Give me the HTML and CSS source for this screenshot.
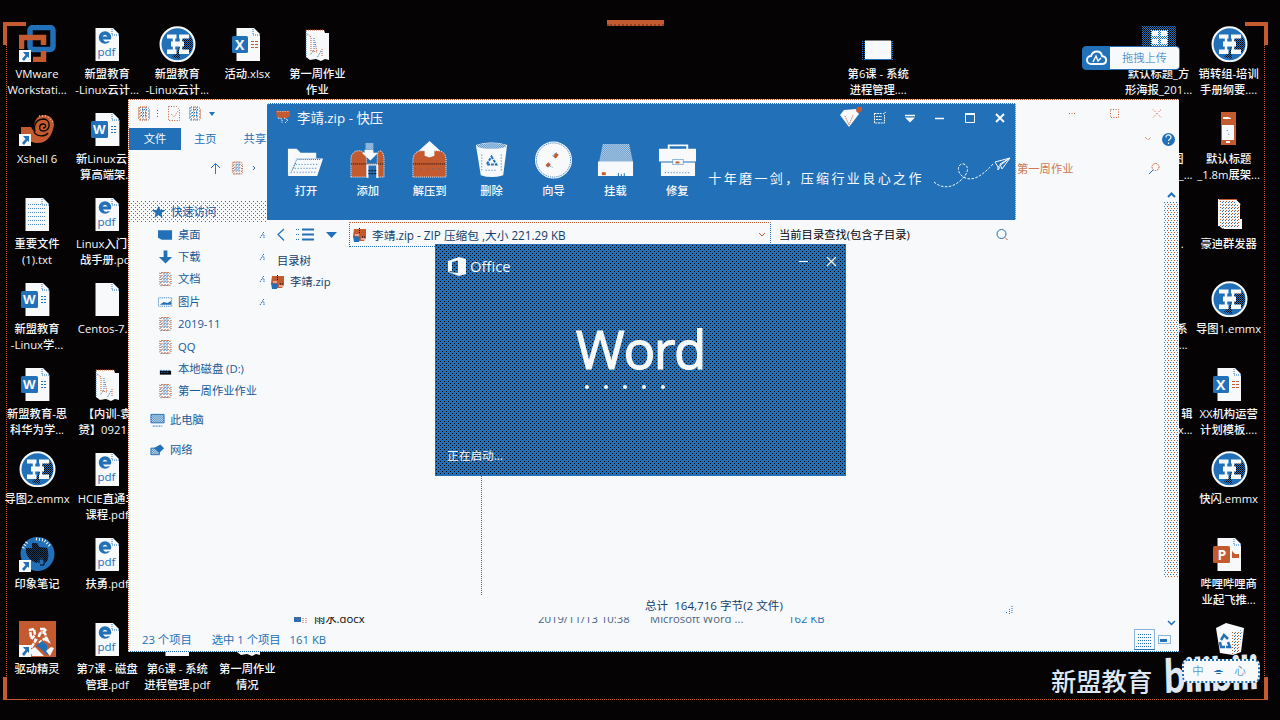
FILE: index.html
```html
<!DOCTYPE html>
<html lang="zh-CN">
<head>
<meta charset="utf-8">
<title>桌面</title>
<link rel="stylesheet" href="styles.css">
</head>
<body>
<svg class="defs" width="0" height="0">
  <defs>
    <pattern id="dith" width="2" height="2" patternUnits="userSpaceOnUse"><rect width="1" height="1" fill="#2270b8"/></pattern>
    <pattern id="dithw" width="2" height="2" patternUnits="userSpaceOnUse"><rect width="2" height="2" fill="#2270b8"/><rect width="1" height="1" fill="#f7f9fb"/><rect x="1" y="1" width="1" height="1" fill="#f7f9fb"/></pattern>
    <pattern id="dithk" width="2" height="2" patternUnits="userSpaceOnUse"><rect width="2" height="2" fill="#2270b8"/><rect width="1" height="1" fill="#050304"/><rect x="1" y="1" width="1" height="1" fill="#050304"/></pattern>
    <pattern id="ditho" width="3" height="3" patternUnits="userSpaceOnUse"><rect width="3" height="3" fill="#f7f9fb"/><rect width="1" height="1" fill="#c45a30"/><rect x="2" y="1" width="1" height="1" fill="#2270b8"/></pattern>
  </defs>
  <symbol id="page" viewBox="0 0 37 37"><path d="M6.500 3H24l6 6v27H6.500z" fill="#f7f9fb"/><path d="M23 4v6h7" fill="none" stroke="#2270b8" stroke-dasharray="1 1"/></symbol>
  <symbol id="pdf" viewBox="0 0 37 37"><use href="#page"/><circle cx="16" cy="12.500" r="6.200" fill="#2270b8"/><path d="M13.500 11.500q2.500-3.500 5 0zM14 14.500h9v2l-4.500-.3q-2.500 1.800-4.500-1.700z" fill="#f7f9fb"/><text x="8.500" y="31" font-family="Open Sans" font-size="11.500" fill="#2270b8">pdf</text></symbol>
  <symbol id="txt" viewBox="0 0 37 37"><use href="#page"/><path d="M9 9.500h13M9 13.500h17M9 17.500h17M9 21.500h17M9 25.500h17M9 29.500h17" stroke="#2270b8" stroke-dasharray="1 1" opacity=".8"/></symbol>
  <symbol id="doc" viewBox="0 0 37 37"><use href="#page"/><path d="M22 16.500h6M22 19.500h6M22 22.500h6" stroke="#2270b8" stroke-dasharray="2 1"/><path d="M30.500 10v26" stroke="#2270b8"/><rect x="2" y="11" width="17" height="17" rx="1.500" fill="#2270b8"/><text x="4" y="24" font-family="Open Sans" font-weight="700" font-size="13" fill="#f7f9fb">W</text></symbol>
  <symbol id="xls" viewBox="0 0 37 37"><use href="#page"/><path d="M21 16.500h8M21 19.500h8M21 22.500h8" stroke="#c45a30" stroke-dasharray="3 1"/><rect x="2" y="11" width="16" height="17" rx="1.500" fill="#2270b8"/><text x="5" y="24.500" font-family="Open Sans" font-weight="700" font-size="14" fill="#f7f9fb">X</text></symbol>
  <symbol id="ppt" viewBox="0 0 37 37"><use href="#page"/><path d="M21 16v7h7v-4h-4z" fill="#c45a30"/><rect x="2" y="11" width="17" height="17" rx="1.500" fill="#c45a30"/><text x="6.500" y="24.500" font-family="Open Sans" font-weight="700" font-size="14" fill="#f7f9fb">P</text></symbol>
  <symbol id="folder" viewBox="0 0 37 37"><path d="M7 5h18l1 3h4v27l-4-1-4 2-5-2-6 1-4-3z" fill="#f7f9fb"/><path d="M7 5h18M8 9l4 3v14M16 17l2 10-5-1M23 24v7" stroke="#c45a30" stroke-dasharray="1 1" fill="none"/><path d="M15 13v12l-4 5M7 6v26M22 26l-4 7" stroke="#2270b8" stroke-dasharray="1 1" fill="none"/></symbol>
  <symbol id="pack" viewBox="0 0 37 37"><path d="M8 5h17l4 4v25H12l-4-3z" fill="url(#ditho)"/><path d="M8 31V5h16l5 5M30 24v9H13" fill="none" stroke="#f7f9fb" stroke-width="2"/><path d="M8 4.500h18" stroke="#c45a30"/></symbol>
  <symbol id="emmx" viewBox="0 0 37 37"><circle cx="18.500" cy="19.200" r="17" fill="#2270b8" stroke="#f7f9fb" stroke-width="2"/><path d="M24 13h9l1 8-3 7H21v6l-8-2 5-5z" fill="url(#dithk)"/><path d="M8 9.500h9.500v4h-9.500zM20 9.500h10v4H20zM12 16.500h13v5H12zM8 24.500h9.500v4.500H8zM20 24.500h10V29H20z" fill="#f7f9fb"/><path d="M15 13v12M22 13v12" stroke="#f7f9fb" stroke-width="2.500"/></symbol>
  <symbol id="arrow" viewBox="0 0 12 12"><path d="M0 0h12v12H0z" fill="#f7f9fb"/><path d="M4 2h6v6L8.500 6.500 5 11 3 9l3.500-4z" fill="#2270b8"/></symbol>
  <symbol id="tiny" viewBox="0 0 14 14"><path d="M1 0h11v14H1z" fill="url(#ditho)"/><path d="M1.500 1v12M3 13.500h8M3 .5h8M12.500 3v10" stroke="#c45a30" stroke-dasharray="1 1"/><path d="M5 3h5M4 6h6M4 9h6" stroke="#2270b8" stroke-dasharray="1 1"/></symbol>
  <symbol id="zip" viewBox="0 0 14 14"><path d="M1 1h12v9l-2 3H2L0 8z" fill="#c45a30"/><path d="M0 8l7 1-1 5H1z" fill="#2270b8"/><path d="M6.500 0v6M9 9h4" stroke="#050304" stroke-dasharray="1 1"/><path d="M2 7h4M8 11h4" stroke="#f7f9fb"/></symbol>
  <symbol id="pin" viewBox="0 0 8 10"><path d="M5 2L3 4l2 1v3M3 5L1 8" fill="none" stroke="#2270b8" stroke-dasharray="1.500 .7"/></symbol>
</svg>

<div class="desktop">
  <div class="col c1">
    <div class="item"><svg class="ico" viewBox="0 0 37 37"><rect x="11" y="2.500" width="23" height="22" rx="3" fill="none" stroke="#2270b8" stroke-width="5.500"/><path d="M2.500 24V12.500h22V20M24.500 26v8.500H14" fill="none" stroke="#c45a30" stroke-width="5.500"/><use href="#arrow" y="25" width="12" height="12"/></svg><span>VMware<br>Workstati...</span></div>
    <div class="item"><svg class="ico" viewBox="0 0 37 37"><path d="M2 17h10l3 5c-1-9 2-17 10-17 6 0 10 4 10 10-2 12-8 18-16 18-6 0-10-2-17-8z" fill="#c45a30"/><path d="M16 22c-2-8 2-13 9-13 7 1 7 12-1 12-5 0-4-7 0-7 4 0 3 4 0 4M15 22c3 5 11 5 14 1" fill="none" stroke="#050304" stroke-width="1.300"/><path d="M20 6h8l7 7" fill="none" stroke="#f7f9fb" stroke-dasharray="1 2"/><use href="#arrow" y="24" width="12" height="12"/></svg><span>Xshell 6</span></div>
    <div class="item"><svg class="ico"><use href="#txt"/></svg><span>重要文件<br>(1).txt</span></div>
    <div class="item"><svg class="ico"><use href="#doc"/></svg><span>新盟教育<br>-Linux学...</span></div>
    <div class="item"><svg class="ico"><use href="#doc"/></svg><span>新盟教育-思<br>科华为学...</span></div>
    <div class="item"><svg class="ico"><use href="#emmx"/></svg><span>导图2.emmx</span></div>
    <div class="item"><svg class="ico" viewBox="0 0 37 37"><circle cx="18.500" cy="19" r="17" fill="#2270b8"/><path d="M7 13h6V8h5l2 4 8 1c2 6 2 12-2 15l-1-5-5 0-2 5c-5-2-12-6-11-15z" fill="#050304"/><path d="M7 13h6V8h5l2 4 8 1c2 6 2 12-2 15l-1-5-5 0-2 5c-5-2-12-6-11-15z" fill="url(#dithk)" opacity=".5"/><path d="M20 28v-4h5v6h-4" fill="none" stroke="#050304"/><path d="M17 4l8 1 7 7M4 13l4-6" stroke="#f7f9fb" stroke-dasharray="1 2" stroke-width="3" fill="none"/><use href="#arrow" y="25" width="12" height="12"/></svg><span>印象笔记</span></div>
    <div class="item"><svg class="ico" viewBox="0 0 37 37"><path d="M0 1h37v36H0z" fill="#c45a30"/><path d="M12 17l-1-7 4-1 1 6-3 3 4 2-5 8M21 9h6l-2 3h-3M20 17c0-6 7-6 7 0l2 4-4-2-5 4" fill="none" stroke="#f7f9fb" stroke-width="2.500" stroke-dasharray="5 1"/><path d="M17 26l6-5 5 4v5l4 2-4 3-6-6z" fill="#2270b8"/><path d="M11 30l5-3 9 9H13zM27 31l5-4 3 1-4 8z" fill="#f7f9fb"/><use href="#arrow" y="25" width="12" height="12"/></svg><span>驱动精灵</span></div>
  </div>
  <div class="col c2">
    <div class="item"><svg class="ico"><use href="#pdf"/></svg><span>新盟教育<br>-Linux云计...</span></div>
    <div class="item"><svg class="ico"><use href="#doc"/></svg><span>新Linux云计<br>算高端架...</span></div>
    <div class="item"><svg class="ico"><use href="#pdf"/></svg><span>Linux入门实<br>战手册.pdf</span></div>
    <div class="item"><svg class="ico"><use href="#page"/></svg><span>Centos-7....</span></div>
    <div class="item"><svg class="ico"><use href="#folder"/></svg><span>【内训-袁<br>赟】0921...</span></div>
    <div class="item"><svg class="ico"><use href="#pdf"/></svg><span>HCIE直通车<br>课程.pdf</span></div>
    <div class="item"><svg class="ico"><use href="#pdf"/></svg><span>扶勇.pdf</span></div>
    <div class="item"><svg class="ico"><use href="#pdf"/></svg><span>第7课 - 磁盘<br>管理.pdf</span></div>
  </div>
  <div class="col c3">
    <div class="item"><svg class="ico"><use href="#emmx"/></svg><span>新盟教育<br>-Linux云计...</span></div>
    <div class="item last"><svg class="ico"><use href="#page"/></svg><span>第6课 - 系统<br>进程管理.pdf</span></div>
  </div>
  <div class="col c4">
    <div class="item"><svg class="ico"><use href="#xls"/></svg><span>活动.xlsx</span></div>
    <div class="item last"><svg class="ico"><use href="#folder"/></svg><span>第一周作业<br>情况</span></div>
  </div>
  <div class="col c5">
    <div class="item"><svg class="ico"><use href="#folder"/></svg><span>第一周作业<br>作业</span></div>
  </div>
  <div class="col c13">
    <div class="item"><svg class="ico" viewBox="0 0 37 37"><path d="M1 15h33v20H1z" fill="url(#dith)"/><path d="M5 15.500h26V34H5z" fill="#f7f9fb"/><path d="M5 34.500h26.500V16" fill="none" stroke="#2270b8"/></svg><span>第6课 - 系统<br>进程管理....</span></div>
  </div>
  <div class="col c17">
    <div class="item"><svg class="ico" viewBox="0 0 37 37"><path d="M2 1h34v20H2z" fill="url(#dithk)"/><path d="M11 5h17v16H11z" fill="url(#dithw)"/><path d="M12 6h6v5h-6zM21 6h6v5h-6zM12 14h6v5h-6zM21 14h6v5h-6z" fill="#f7f9fb"/></svg><span>默认标题_方<br>形海报_201...</span></div>
    <div class="item part p1"><span><em>图</em><br>_...</span></div>
    <div class="item part p10"><span>.</span></div>
    <div class="item part p6"><span>系<br>...</span></div>
    <div class="item part p1"><span>辑<br>x...</span></div>
  </div>
  <div class="col c18">
    <div class="item"><svg class="ico"><use href="#emmx"/></svg><span>销转组-培训<br>手册纲要....</span></div>
    <div class="item"><svg class="ico" viewBox="0 0 37 37"><path d="M10 2h15v33H10z" fill="#c45a30"/><path d="M11 15h12v15H11zM12 7h5l3 1v1h-8zM15 31h4v2h-4z" fill="#f7f9fb"/><path d="M16 20l2 5" stroke="#2270b8" stroke-dasharray="1 3"/></svg><span>默认标题<br>_1.8m展架...</span></div>
    <div class="item"><svg class="ico"><use href="#pack"/></svg><span>豪迪群发器</span></div>
    <div class="item"><svg class="ico"><use href="#emmx"/></svg><span>导图1.emmx</span></div>
    <div class="item"><svg class="ico"><use href="#xls"/></svg><span>XX机构运营<br>计划模板....</span></div>
    <div class="item"><svg class="ico"><use href="#emmx"/></svg><span>快闪.emmx</span></div>
    <div class="item"><svg class="ico"><use href="#ppt"/></svg><span>哔哩哔哩商<br>业起飞推...</span></div>
    <div class="item"><svg class="ico" viewBox="0 0 37 37"><path d="M5 8l10-5 18 5-3 24-8 3-13-2z" fill="#f7f9fb"/><path d="M21 12l10-2-3 22-7 2z" fill="url(#ditho)"/><path d="M10 20l3-5 4 4M9 22l1 5h4M15 27h4l-2-5" fill="none" stroke="#2270b8" stroke-width="2.500"/></svg><span></span></div>
  </div>
</div>

<div class="upload"><div class="cloud"><svg width="22" height="17" viewBox="0 0 22 17"><path d="M5 14a4 4 0 0 1 0-8C7 0 15 0 16 6c6 1 5 8 0 8z" fill="none" stroke="#f7f9fb" stroke-width="2"/><path d="M7 12l3-6 2 5 3-3" fill="none" stroke="#f7f9fb" stroke-width="1.500"/></svg></div><div class="drop">拖拽上传</div></div>

<section class="explorer">
  <header class="ex-title">
    <svg width="90" height="16" viewBox="0 0 90 16"><use href="#tiny" x="8" y="0" width="14" height="15"/><path d="M28.500 4v8" stroke="#2270b8" stroke-dasharray="1 2"/><path d="M39.500 .5h8l3 3v11h-11zM42 8l3 3 4-6" fill="none" stroke="#c45a30" stroke-dasharray="1 1.500"/><use href="#tiny" x="59" y="0" width="14" height="15"/><path d="M80 6h6l-3 4z" fill="#2270b8"/></svg>
    <svg width="100" height="12" viewBox="0 0 100 12"><path d="M2 5.500h6M43.500 1.500h8v8h-8zM86 1.500l8 8M94 1.500l-8 8" fill="none" stroke="#c45a30" stroke-dasharray="1 1.500"/></svg>
  </header>
  <nav class="tabs"><b>文件</b><span>主页</span><span class="share">共享</span><i></i>
    <svg width="38" height="16" viewBox="0 0 38 16"><path d="M4 6l3 3 3-3" fill="none" stroke="#c45a30" stroke-dasharray="1 1"/><circle cx="27.500" cy="8.500" r="6.500" fill="#2270b8"/><path d="M25 6.500c0-4 5-3 5 0 0 1.500-2.500 2-2.500 3.500M27.500 11.500v1.500" fill="none" stroke="#f7f9fb" stroke-width="1.200"/></svg></nav>
  <div class="address">
    <svg width="50" height="16" viewBox="0 0 50 16"><path d="M6.500 13V3M2 7l4.500-4.500L11 7" fill="none" stroke="#2270b8"/><path d="M6.500 13V3" stroke="#c45a30" stroke-dasharray="1 1"/><use href="#tiny" x="22" y="0" width="13" height="14"/><path d="M44 5l2 2-2 2" fill="none" stroke="#2270b8"/></svg>
    <span class="crumb">第一周作业</span>
    <svg class="find" width="14" height="14" viewBox="0 0 14 14"><circle cx="8.500" cy="5" r="3.500" fill="none" stroke="#c45a30" stroke-dasharray="1.500 .8"/><path d="M6 8l-4 4" stroke="#2270b8"/></svg>
  </div>
  <div class="ex-body">
    <ul class="side">
      <li class="sel"><svg class="si" viewBox="0 0 14 14"><path d="M7 1l2 4h5l-4 3 1 5-4-3-4 3 1-5-4-3h5z" fill="#2270b8"/></svg>快速访问</li>
      <li><svg class="si" viewBox="0 0 16 14"><path d="M0 2h15v10H4l-4-2z" fill="#2270b8"/></svg>桌面<svg class="pin"><use href="#pin"/></svg></li>
      <li><svg class="si" viewBox="0 0 16 14"><path d="M6 0h4v7h5l-7 7-7-7h5z" fill="#2270b8"/></svg>下载<svg class="pin"><use href="#pin"/></svg></li>
      <li><svg class="si"><use href="#tiny"/></svg>文档<svg class="pin"><use href="#pin"/></svg></li>
      <li><svg class="si" viewBox="0 0 16 14"><path d="M.5 2.500h14v9H.5z" fill="none" stroke="#2270b8" stroke-dasharray="1 1"/><path d="M2 10l4-3 4 1 4-2v4z" fill="#2270b8"/></svg>图片<svg class="pin"><use href="#pin"/></svg></li>
      <li><svg class="si"><use href="#tiny"/></svg>2019-11</li>
      <li><svg class="si"><use href="#tiny"/></svg>QQ</li>
      <li><svg class="si" viewBox="0 0 16 14"><path d="M2 9h12v4H2z" fill="#050304"/><path d="M2 8.500h12M3 10.500h9" stroke="#2270b8" stroke-dasharray="2 1"/></svg>本地磁盘 (D:)</li>
      <li><svg class="si"><use href="#tiny"/></svg>第一周作业作业</li>
      <li class="root"><svg class="si" viewBox="0 0 16 14"><path d="M1 1h14v9H1z" fill="url(#dithw)" stroke="#2270b8"/><path d="M3 13.500h10" stroke="#2270b8" stroke-dasharray="2 1"/></svg>此电脑</li>
      <li class="root"><svg class="si" viewBox="0 0 16 14"><path d="M1 5h9v7H1z" fill="url(#dithw)" stroke="#2270b8"/><path d="M4 5l7-4 4 4-5 5z" fill="#2270b8"/></svg>网络</li>
    </ul>
    <div class="files"><svg width="14" height="12" viewBox="0 0 14 12"><path d="M0 2h7v7H0z" fill="#2270b8"/><path d="M2 4l2 3 2-3M9 3v7M12 3v7" stroke="#c45a30" stroke-dasharray="1 1" fill="none"/></svg><span class="f1">雨水.docx</span><span class="f2">2019/11/13 10:38</span><span class="f3">Microsoft Word ...</span><span>162 KB</span></div>
    <div class="scroll"><svg width="9" height="6" viewBox="0 0 9 6"><path d="M1 5l3.500-3.500L8 5" fill="none" stroke="#2270b8" stroke-width="2"/></svg><div class="thumb"></div><svg width="9" height="6" viewBox="0 0 9 6"><path d="M1 1l3.500 3.500L8 1" fill="none" stroke="#2270b8" stroke-width="1.500"/></svg></div>
  </div>
  <footer class="status"><span>23 个项目</span><span>选中 1 个项目</span><span>161 KB</span><i></i>
    <svg width="43" height="22" viewBox="0 0 43 22"><path d="M.5 .5h20v20H.5z" fill="none" stroke="#2270b8" stroke-dasharray="1 1"/><path d="M4 5.500h13M4 8.500h13M4 11.500h13M4 14.500h13M2 17.500h16" stroke="#2270b8" stroke-dasharray="1 1"/><path d="M0 20.500h21" stroke="#2270b8"/><path d="M24.500 6.500h12v8h-12z" fill="none" stroke="#2270b8" stroke-dasharray="1 1"/><path d="M26 10h7v3h-7z" fill="#2270b8"/></svg>
  </footer>
</section>

<section class="zipwin">
  <header class="zip-head">
    <div class="zip-title">
      <svg width="14" height="14" viewBox="0 0 14 14"><path d="M0 0h14v5l-3 2H1z" fill="#c45a30"/><path d="M1 0h12M2 7l4 1v4M8 7l4 2-3 3" fill="none" stroke="#f7f9fb" stroke-dasharray="1.500 1"/></svg>
      <span>李靖.zip - 快压</span><i></i>
      <svg width="168" height="22" viewBox="0 0 168 22"><path d="M1 8l4-5 12-1 3 5-10 13z" fill="#f7f9fb"/><path d="M6 9l4 9 4-10" stroke="#c45a30" stroke-dasharray="1 1" fill="none"/><path d="M18 0h5v4l-4 2-2-2z" fill="#c45a30"/>
      <path d="M35.500 6.500h7M35.500 6v10h10V8M37 9.500h6M37 12.500h6M44 7l3-2" fill="none" stroke="#f7f9fb" stroke-dasharray="2 .7"/><path d="M66 8.500h10" stroke="#f7f9fb" stroke-width="1.500"/><path d="M66 10.500h10l-5 5z" fill="#f7f9fb"/><path d="M96 11.500h9" stroke="#f7f9fb" stroke-width="1.500"/><path d="M126.500 7h9v8.500h-9z" fill="none" stroke="#f7f9fb"/><path d="M126 7h10" stroke="#f7f9fb" stroke-width="2"/><path d="M157 7l8 8M165 7l-8 8" stroke="#f7f9fb" stroke-width="2"/></svg>
    </div>
    <div class="tools">
      <div class="tool"><svg class="ti" viewBox="0 0 40 40"><path d="M2 36V8h9l4 4h16v6H10z" fill="#f7f9fb"/><path d="M2 36L9 18h29l-6 18z" fill="#f7f9fb"/><path d="M5 33l6-14h25M7 29l3-7" fill="none" stroke="#2270b8" stroke-dasharray="1 1"/><path d="M10 24h22M9 28h22M8 32h22" stroke="#2270b8" stroke-dasharray="1 2"/></svg><span>打开</span></div>
      <div class="tool"><svg class="ti" viewBox="0 0 40 40"><path d="M3 37V19c0-6 4-9 8-9 5 0 8 4 8 9v18zM30 37V19c0-6 1-9 3-9 2 0 4 4 4 9v18z" fill="#c45a30" stroke="#f7f9fb" stroke-dasharray="1 1"/><path d="M17 9h9v3h5l-8 8-9-8h3z" fill="#f7f9fb"/><path d="M18 2h8v7h-8z" fill="url(#dithw)"/><path d="M20 23v15M20 24h10v14" fill="none" stroke="#f7f9fb" stroke-width="2"/><path d="M21 30.500h8M21 33.500h8" stroke="#050304" stroke-dasharray="2 1"/><path d="M3 23.500h34" stroke="#050304" stroke-dasharray="1 1"/></svg><span>添加</span></div>
      <div class="tool"><svg class="ti" viewBox="0 0 40 40"><path d="M3 37V20c0-7 4-10 9-10h17c5 0 8 4 8 10v17z" fill="#c45a30" stroke="#f7f9fb" stroke-dasharray="1 1"/><path d="M9 10L20 0l11 10h-6v5l-5 2-5-2v-5z" fill="#f7f9fb"/><path d="M3 23.500h34" stroke="#050304" stroke-dasharray="1 1"/><path d="M5 28.500h30" stroke="#2270b8" stroke-dasharray="1 5"/></svg><span>解压到</span></div>
      <div class="tool"><svg class="ti" viewBox="0 0 40 40"><path d="M4 4q16-5 32 0l-4 31q-12 4-23 0z" fill="#f7f9fb"/><ellipse cx="20" cy="5" rx="15" ry="3" fill="url(#dithw)"/><path d="M20 16l5 8H15z" fill="none" stroke="#2270b8" stroke-width="2" stroke-dasharray="3 1"/><path d="M10 14v18M30 14v18M14 30h12" stroke="#2270b8" stroke-dasharray="1 2"/></svg><span>删除</span></div>
      <div class="tool"><svg class="ti" viewBox="0 0 40 40"><circle cx="20" cy="19.500" r="19" fill="#f7f9fb"/><circle cx="20" cy="19.500" r="17.500" fill="none" stroke="#2270b8" stroke-dasharray="1 1"/><path d="M24 13l-3 4M16 23l-3 3" stroke="#c45a30" stroke-width="3.500"/><path d="M19 15l4-3M15 25l4 2" stroke="#2270b8" stroke-dasharray="1 1"/></svg><span>向导</span></div>
      <div class="tool"><svg class="ti" viewBox="0 0 40 40"><path d="M7 3h27l4 19H3z" fill="url(#dithw)"/><path d="M2 21h36v15H2z" fill="#f7f9fb"/><path d="M6 32h4v3H6z" fill="#c45a30"/><path d="M23 33v3M26 34v2M29 33v3" stroke="#2270b8"/></svg><span>挂载</span></div>
      <div class="tool"><svg class="ti" viewBox="0 0 40 40"><path d="M11 9V4.500h19V9" fill="none" stroke="#f7f9fb" stroke-width="2"/><path d="M1 8h38v13H1zM3 22h35v14H3z" fill="#f7f9fb"/><path d="M15 19h11v5H15z" fill="#f7f9fb" stroke="#2270b8" stroke-dasharray="1 1"/><path d="M18 21h4v2h-4z" fill="#c45a30"/><path d="M7 32.500h27" stroke="#2270b8" stroke-dasharray="1 2"/></svg><span>修复</span></div>
      <div class="slogan">十年磨一剑，压缩行业良心之作</div>
      <svg class="plane" width="82" height="38" viewBox="0 0 82 38"><path d="M3 27c8 7 18 6 26-1 8-7 10-14 4-17-6-1-8 7-2 12 10 8 22-2 31-12" fill="none" stroke="#f7f9fb" stroke-dasharray="2.500 1.500"/><path d="M64 7l15-4-8 11-2-5 10-6-12 9-3-5M67 12v3l2-3" fill="none" stroke="#f7f9fb"/></svg>
    </div>
  </header>
  <div class="zip-bar">
    <svg width="72" height="16" viewBox="0 0 72 16"><path d="M11 2L5 7.500l6 6" fill="none" stroke="#2270b8" stroke-width="1.200"/><path d="M23 2.500h4M23 7.500h4M23 12.500h4" stroke="#2270b8" stroke-dasharray="1 1"/><path d="M29 2.500h12M29 7.500h12M29 12.500h12" stroke="#2270b8" stroke-width="2"/><path d="M53 5h11l-5.500 6z" fill="#2270b8"/></svg>
    <div class="path"><svg width="14" height="14"><use href="#zip"/></svg><span>李靖.zip - ZIP 压缩包 ,大小 221.29 KB</span><i></i><svg width="8" height="6" viewBox="0 0 8 6"><path d="M1 1l3 3 3-3" fill="none" stroke="#c45a30"/></svg></div>
    <span class="q">当前目录查找(包含子目录)</span><i></i>
    <svg width="12" height="12" viewBox="0 0 12 12"><circle cx="5.500" cy="5" r="4.500" fill="none" stroke="#2270b8"/><path d="M9 8.500l2.500 2.500" stroke="#c45a30"/></svg>
  </div>
  <div class="zip-body"><div class="tree"><div>目录树</div><div class="node"><svg width="14" height="14"><use href="#zip"/></svg>李靖.zip</div></div></div>
  <footer class="zip-foot"><span>总计&nbsp; 164,716 字节(2 文件)</span><svg width="9" height="9" viewBox="0 0 9 9"><path d="M8 1v8M5.500 4v5M2.500 7v2" stroke="#2270b8" stroke-dasharray="1 1"/></svg></footer>
</section>

<section class="splash">
  <header><svg width="18" height="20" viewBox="0 0 18 20"><path d="M0 4l11-4 7 2v15l-7 2L0 15l10 1V3.500L4 5v9l-4 1z" fill="#f7f9fb"/></svg><span>Office</span><i></i><svg width="40" height="12" viewBox="0 0 40 12"><path d="M0 4.500h9M28 0l9 9M37 0l-9 9" stroke="#f7f9fb" stroke-width="1.200"/></svg></header>
  <h1>Word</h1>
  <div class="dots"><b></b><b></b><b></b><b></b><b></b></div>
  <footer>正在启动...</footer>
</section>

<div class="frame"><b class="tl"></b><b class="tr"></b><b class="bl"></b><b class="br"></b></div>
<div class="grab"></div>
<div class="brand">新盟教育</div>
<div class="bili"><span>bilibili</span><div class="tag">中 ⌯ 心</div></div>
</body>
</html>
```
FILE: styles.css
```css
* { box-sizing: border-box; }
:root { --k: #050304; --b: #2270b8; --o: #c45a30; --w: #f7f9fb; }
body { margin: 0; width: 1280px; height: 720px; overflow: hidden; position: relative; background: var(--k); color: var(--w);
  font: 11.3px/16px "Open Sans", "Noto Sans CJK SC", sans-serif; }
i { flex: 1; }
svg { flex: none; display: block; }
.defs { position: absolute; }

/* desktop icons */
.desktop { display: grid; grid-template-columns: repeat(18, 70.1px); height: 704px; margin-left: 2px; padding-top: 24px; }
.col { display: flex; flex-direction: column; height: 680px; grid-row: 1; }
.c1 { grid-column: 1; } .c2 { grid-column: 2; } .c3 { grid-column: 3; } .c4 { grid-column: 4; } .c5 { grid-column: 5; }
.c13 { grid-column: 13; } .c17 { grid-column: 17; } .c18 { grid-column: 18; }
.item { height: 85px; display: flex; flex-direction: column; align-items: center; padding-top: 1px; white-space: nowrap; text-align: center; font-weight: 500; }
.item span { margin-top: 4px; }
.c18 .ico, .c4 .ico { margin-left: 2px; }
.ico { width: 37px; height: 37px; }
.last { margin-top: auto; }
.part { align-items: flex-end; padding-top: 38px; text-align: right; }
.part em { font-style: normal; margin-right: 9px; }
.p1 { padding-right: 1px; } .p6 { padding-right: 6px; } .p10 { padding-right: 10px; }

.upload { position: absolute; left: 1082px; top: 46px; width: 98px; height: 24px; display: flex; background: var(--b); border: 1px solid var(--b); border-radius: 4px; }
.cloud { width: 27px; display: flex; align-items: center; justify-content: center; }
.drop { flex: 1; display: flex; align-items: center; justify-content: center; background: var(--w); color: var(--b); border-radius: 0 3px 3px 0; font-weight: 300; }

/* file explorer */
.explorer { position: absolute; left: 128px; top: 99px; width: 1051px; height: 553px; display: flex; flex-direction: column; background: var(--w); color: var(--b);
  border-top: 1px dotted var(--o); border-left: 1px dotted var(--o); border-bottom: 1px dotted var(--b); }
.ex-title { height: 28px; display: flex; justify-content: space-between; align-items: center; padding-right: 12px; }
.tabs { height: 22px; display: flex; align-items: center; }
.tabs b { width: 52px; height: 22px; line-height: 22px; text-align: center; background: var(--b); color: var(--w); font-weight: 400; }
.tabs span { margin-left: 13px; }
.tabs .share { margin-left: 27px; }
.address { height: 51px; display: flex; align-items: center; padding: 0 18px 14px 80px; }
.crumb { margin-left: 758px; color: var(--o); opacity: .8; }
.find { margin-left: auto; }
.ex-body { flex: 1; display: flex; min-height: 0; }
.side { list-style: none; margin: 0; padding: 0; width: 138px; }
.side li { height: 22.4px; display: flex; align-items: center; gap: 5px; padding-left: 29px; white-space: nowrap; color: #175a98; }
.side .sel { padding-left: 22px; background: radial-gradient(circle at .5px .5px, var(--b) .5px, transparent .6px) 0 0/4px 4px, radial-gradient(circle at .5px .5px, var(--o) .5px, transparent .6px) 2px 2px/4px 4px; }
.side .root { height: 30px; padding-left: 21px; transform: translateY(2px); }
.si { width: 15px; height: 14px; }
.pin { width: 8px; height: 10px; margin-left: auto; }
.files { flex: 1; display: flex; align-items: center; align-self: flex-end; height: 18px; margin: 0 0 1px 27px; }
.f1 { width: 230px; padding-left: 6px; color: var(--k); } .f2 { width: 112px; color: #4a6484; } .f3 { width: 138px; color: #4a6484; }
.scroll { width: 15px; display: flex; flex-direction: column; align-items: center; margin-top: -9px; padding-bottom: 3px; }
.thumb { width: 15px; height: 376px; margin: 4px 0 auto; background: radial-gradient(circle at .5px .5px, var(--b) .6px, transparent .8px) 0 0/3px 4px, radial-gradient(circle at .5px .5px, var(--o) .6px, transparent .8px) 1px 2px/3px 4px; }
.status { height: 22px; display: flex; align-items: center; gap: 20px; padding: 0 2px 0 13px; }
.status span:nth-child(3) { margin-left: -11px; }

/* archive manager */
.zipwin { position: absolute; left: 267px; top: 103px; width: 749px; height: 514px; display: flex; flex-direction: column; background: var(--w); color: #123e6a; }
.zip-head { height: 117px; background: var(--b); color: var(--w); border-top: 1px dotted var(--w); border-right: 1px dotted var(--w); border-radius: 2px 2px 0 0; }
.zip-title { height: 28px; display: flex; align-items: center; padding: 0 8px 0 9px; gap: 7px; font-size: 13.4px; }
.tools { display: flex; padding: 9px 0 0 8px; }
.tool { width: 61.9px; flex: none; display: flex; flex-direction: column; align-items: center; }
.ti { width: 39px; height: 39px; }
.tool span { margin-top: 4px; line-height: 14px; font-weight: 500; }
.slogan { margin-top: 27px; width: 222px; flex: none; white-space: nowrap; font: 400 13px/20px "Noto Sans CJK SC", sans-serif; letter-spacing: 2.4px; }
.plane { margin: 14px 0 0 1px; }
.zip-bar { height: 27px; padding: 2px 8px 0 6px; display: flex; align-items: center; }
.path { margin-left: 4px; width: 422px; height: 25px; display: flex; align-items: center; gap: 5px; padding: 0 4px 0 3px; border: 1px dotted var(--b); border-top-color: var(--o); white-space: nowrap; }
.path span { font-size: 11.7px; }
.q { margin-left: 8px; color: var(--k); }
.zip-body { flex: 1; }
.tree { width: 215px; height: 348px; border-right: 1px dotted var(--b); padding: 6px 0 0 10px; }
.node { display: flex; gap: 5px; margin: 5px 0 0 -6px; align-items: center; }
.zip-foot { height: 22px; display: flex; padding: 0 3px 0 378px; justify-content: space-between; align-items: center; }
.zip-foot span { font-size: 11.6px; }
.zip-foot svg { margin-top: 7px; }

/* application splash */
.splash { position: absolute; left: 435px; top: 244px; width: 411px; height: 232px; display: flex; flex-direction: column; align-items: center; border: 1px solid var(--b);
  background: radial-gradient(circle at .5px .5px, var(--k) .6px, transparent .8px) 0 0/4px 4px, radial-gradient(circle at .5px .5px, var(--k) .6px, transparent .8px) 2px 2px/4px 4px, var(--b); }
.splash header { align-self: stretch; display: flex; padding: 12px 6px 0 12px; height: 72px; gap: 4px; }
.splash header span { font-size: 14.8px; line-height: 19px; }
.splash h1 { margin: 0; font: 500 53px/64px "Open Sans", sans-serif; letter-spacing: -1.4px; -webkit-text-stroke: 1.1px var(--w); }
.dots { display: flex; gap: 15px; margin-top: 4px; padding-right: 31px; }
.dots b { width: 4px; height: 4px; border-radius: 50%; background: var(--w); }
.splash footer { align-self: flex-start; margin: auto 0 12px 11px; font-size: 11.7px; }

/* capture frame */
.frame { position: absolute; left: 6px; top: 24px; width: 1259px; height: 676px; border: 1px dotted var(--o); border-top: 0; pointer-events: none; }
.frame b { position: absolute; width: 23px; height: 23px; border: 0 solid var(--o); }
.frame .tl { left: -4px; top: -2px; border-width: 4px 0 0 4px; }
.frame .tr { right: -4px; top: -2px; border-width: 4px 4px 0 0; }
.frame .bl { left: -4px; bottom: -1px; border-width: 0 0 1px 4px; }
.frame .br { right: -4px; bottom: -1px; border-width: 0 4px 1px 0; }
.grab { position: absolute; left: 607px; top: 20px; width: 57px; height: 6px; background: var(--o); border-bottom: 2px dotted #8c4124; }

.brand { position: absolute; left: 1051px; top: 661px; font: 500 25.3px/38px "Noto Sans CJK SC", sans-serif; white-space: nowrap; color: #dfe8f2; }
.bili { position: absolute; left: 1163px; top: 650px; width: 98px; height: 48px; }
.bili span { position: absolute; left: 1px; top: 0; font: 900 47px/50px Lato, sans-serif; letter-spacing: -1px; transform: scaleX(.79) rotate(-2deg); transform-origin: 0 50%; white-space: nowrap; color: #dfe8f2; }
.tag { position: absolute; left: 19px; top: 9px; width: 78px; height: 24px; display: flex; align-items: center; justify-content: center; background: var(--w); border: 2px dotted var(--b); border-radius: 6px; color: var(--b); font-weight: 300; letter-spacing: 4px; }
```
